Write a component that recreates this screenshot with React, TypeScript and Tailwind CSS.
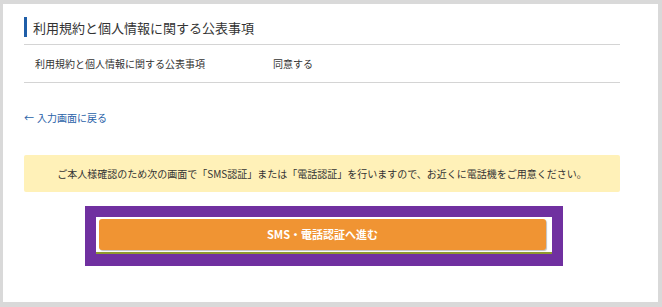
import React from "react";

export default function App() {
  const font = { fontFamily: '"Noto Sans CJK JP", "Noto Sans", sans-serif' };
  return (
    <div className="w-[662px] h-[307px] bg-[#d9d9d9] pt-[4px] pl-[3px] pr-[4px] pb-[5px]" style={font}>
      <div className="h-[298px] bg-white pl-[21px] pr-[38px] pt-[13px]">
        <div className="w-[596px]">
          <div className="flex items-center h-[20px] border-l-[3px] border-[#1f5ea8] pl-[6px] text-[13px] text-[#333] leading-none">
            利用規約と個人情報に関する公表事項
          </div>
          <div className="mt-[7px] border-t border-b border-[#d4d4d4] h-[39px] flex items-center text-[10px] text-[#333]">
            <div className="pl-[11px] w-[249px]">利用規約と個人情報に関する公表事項</div>
            <div>同意する</div>
          </div>
          <div className="mt-[27px] h-[14px] flex items-center text-[10px] text-[#2a62a8]">
            <span className="mr-[3px]">←</span>入力画面に戻る
          </div>
          <div className="mt-[31px] h-[37px] rounded-[2px] bg-[#fff1b8] flex items-center justify-center text-[10px] text-[#333]">
            ご本人様確認のため次の画面で「SMS認証」または「電話認証」を行いますので、お近くに電話機をご用意ください。
          </div>
          <div className="mt-[14px] flex justify-center pl-[4px]">
            <div className="w-[478px] h-[60px] bg-[#7030a0] pt-[11px] pl-[11px] pr-[11px]">
              <div className="h-[37px] bg-white pt-[2px] pl-[3px] pr-[6px] border-b-2 border-[#8f9a2e]">
                <div className="h-[31px] rounded-[3px] bg-[#f09433] shadow-[1px_1px_1px_rgba(0,0,0,0.25)] flex items-center justify-center text-white font-bold text-[11px]">
                  SMS・電話認証へ進む
                </div>
              </div>
            </div>
          </div>
        </div>
      </div>
    </div>
  );
}
